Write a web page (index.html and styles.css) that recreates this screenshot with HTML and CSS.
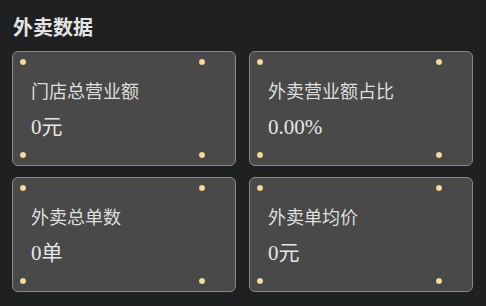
FILE: index.html
```html
<!DOCTYPE html>
<html lang="zh">
<head>
<meta charset="utf-8">
<title>外卖数据</title>
<link rel="stylesheet" href="styles.css">
</head>
<body>
<div class="page">
  <h1 class="title">外卖数据</h1>
  <div class="grid">
    <div class="card">
      <span class="dot tl"></span><span class="dot tr"></span><span class="dot bl"></span><span class="dot br"></span>
      <div class="label">门店总营业额</div>
      <div class="value">0元</div>
    </div>
    <div class="card">
      <span class="dot tl"></span><span class="dot tr"></span><span class="dot bl"></span><span class="dot br"></span>
      <div class="label">外卖营业额占比</div>
      <div class="value">0.00%</div>
    </div>
    <div class="card">
      <span class="dot tl"></span><span class="dot tr"></span><span class="dot bl"></span><span class="dot br"></span>
      <div class="label">外卖总单数</div>
      <div class="value">0单</div>
    </div>
    <div class="card">
      <span class="dot tl"></span><span class="dot tr"></span><span class="dot bl"></span><span class="dot br"></span>
      <div class="label">外卖单均价</div>
      <div class="value">0元</div>
    </div>
  </div>
</div>
</body>
</html>
```

FILE: styles.css
```css
html, body {
  margin: 0;
  padding: 0;
  background: #1f2022;
  width: 486px;
  height: 306px;
  overflow: hidden;
}
.page {
  padding: 14px 13px 0 12px;
}
.title {
  margin: 0 0 0 1px;
  font-family: "Noto Sans CJK SC", "Noto Sans", sans-serif;
  font-size: 20px;
  font-weight: 700;
  line-height: 26px;
  color: #e4e4e4;
}
.grid {
  margin-top: 11px;
  display: grid;
  grid-template-columns: 224px 224px;
  grid-template-rows: 115px 115px;
  column-gap: 13px;
  row-gap: 11px;
}
.card {
  position: relative;
  box-sizing: border-box;
  background: #494949;
  border: 1px solid #8e887b;
  border-radius: 6px;
  padding: 26px 0 0 18px;
}
.dot {
  position: absolute;
  width: 6px;
  height: 6px;
  border-radius: 50%;
  background: radial-gradient(circle, #f6dc9e 45%, #cfa868 100%);
}
.dot.tl { left: 7px; top: 7px; }
.dot.tr { right: 30px; top: 7px; }
.dot.bl { left: 7px; bottom: 7px; }
.dot.br { right: 30px; bottom: 7px; }
.label {
  font-family: "Noto Sans CJK SC", "Noto Sans", sans-serif;
  font-size: 18px;
  line-height: 24px;
  color: #dedede;
}
.value {
  margin-top: 11px;
  font-family: "Liberation Serif", "Noto Sans CJK SC", serif;
  font-size: 21px;
  line-height: 28px;
  color: #e6e6e6;
}
```
